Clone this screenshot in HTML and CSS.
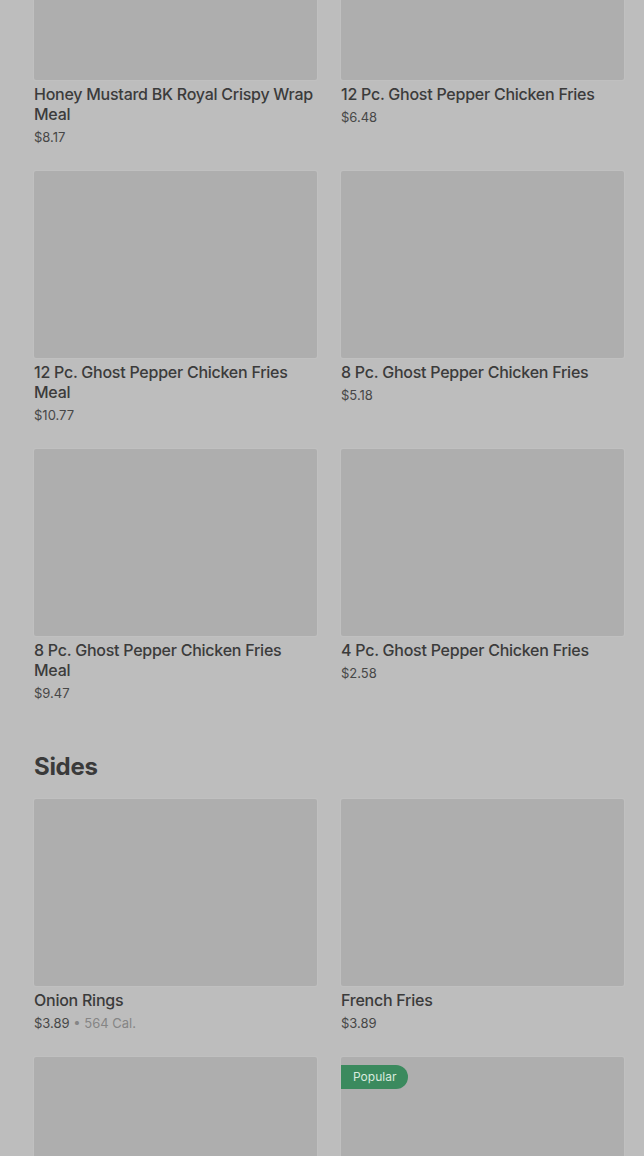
FILE: index.html
```html
<!doctype html>
<html>
  <head>
    <title>Menu</title>
    <link rel="stylesheet" href="styles.css">
  </head>
  <body>
    <div class="menu">
      <section class="categorie">
        <div class="grille">
          <div class="article">
            <div class="photo"></div>
            <div class="nom">Honey Mustard BK Royal Crispy Wrap Meal</div>
            <div class="prix">$8.17</div>
          </div>
          <div class="article">
            <div class="photo"></div>
            <div class="nom">12 Pc. Ghost Pepper Chicken Fries</div>
            <div class="prix">$6.48</div>
          </div>
          <div class="article">
            <div class="photo"></div>
            <div class="nom">12 Pc. Ghost Pepper Chicken Fries Meal</div>
            <div class="prix">$10.77</div>
          </div>
          <div class="article">
            <div class="photo"></div>
            <div class="nom">8 Pc. Ghost Pepper Chicken Fries</div>
            <div class="prix">$5.18</div>
          </div>
          <div class="article">
            <div class="photo"></div>
            <div class="nom">8 Pc. Ghost Pepper Chicken Fries Meal</div>
            <div class="prix">$9.47</div>
          </div>
          <div class="article">
            <div class="photo"></div>
            <div class="nom">4 Pc. Ghost Pepper Chicken Fries</div>
            <div class="prix">$2.58</div>
          </div>
        </div>
      </section>

      <section class="categorie">
        <h2>Sides</h2>
        <div class="grille">
          <div class="article">
            <div class="photo"></div>
            <div class="nom">Onion Rings</div>
            <div class="prix">$3.89 <span class="calories">&bull; 564 Cal.</span></div>
          </div>
          <div class="article">
            <div class="photo"></div>
            <div class="nom">French Fries</div>
            <div class="prix">$3.89</div>
          </div>
          <div class="article">
            <div class="photo"></div>
          </div>
          <div class="article">
            <div class="photo">
              <span class="badge">Popular</span>
            </div>
          </div>
        </div>
      </section>
    </div>
  </body>
</html>
```

FILE: styles.css
```css
body {
  margin: 0;
  background-color: #bdbdbd;
  font-family: Inter, "Liberation Sans", sans-serif;
  color: #3b3b3b;
}

.menu {
  margin-top: -107px;
  padding: 0 20px 0 34px;
}

.categorie h2 {
  margin: 48px 0 16px 0;
  font-size: 24px;
  line-height: 32px;
  font-weight: 700;
  letter-spacing: -0.3px;
  color: #3a3a3a;
}

.grille {
  display: grid;
  grid-template-columns: 1fr 1fr;
  column-gap: 24px;
  row-gap: 24px;
}

.photo {
  position: relative;
  height: 187px;
  background-color: #aeaeae;
  border-radius: 2px;
  box-shadow: 0 0 0 1px rgba(255, 255, 255, 0.06);
}

.nom {
  margin-top: 4px;
  font-size: 16px;
  line-height: 20px;
  font-weight: 500;
  letter-spacing: -0.25px;
}

.prix {
  margin-top: 3px;
  font-size: 13px;
  line-height: 20px;
  color: #474747;
}

.calories {
  color: #858585;
}

.badge {
  position: absolute;
  left: 0;
  top: 8px;
  background-color: #3b8a5e;
  color: #d9ebdf;
  font-size: 12px;
  line-height: 24px;
  padding: 0 12px;
  border-radius: 0 12px 12px 0;
}
```
